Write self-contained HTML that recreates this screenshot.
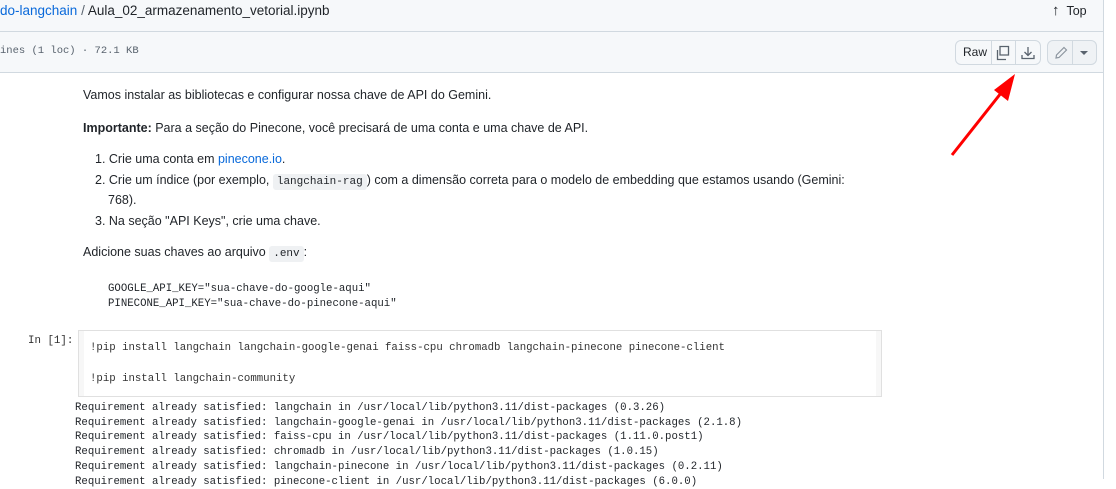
<!DOCTYPE html>
<html><head><meta charset="utf-8"><style>
*{margin:0;padding:0;box-sizing:border-box}
body{width:1116px;height:479px;overflow:hidden;background:#fff;font-family:"Liberation Sans",sans-serif;color:#1f2328;position:relative}
.abs{position:absolute;white-space:nowrap}
.mono{font-family:"Liberation Mono",monospace}
.p{font-size:12.5px;color:#1f2328}
code{font-family:"Liberation Mono",monospace;font-size:11px;background:#eff1f3;padding:2px 4px;border-radius:3px}
.out{font-family:"Liberation Mono",monospace;font-size:10.7px;color:#1f2328;line-height:14.7px}
.btn{position:absolute;top:40px;height:25px;border:1px solid #d1d9e0;background:#f6f8fa;border-radius:6px}
</style></head><body>
<div class="abs" style="left:0;top:0;width:1104px;height:32px;background:#f6f8fa;border-bottom:1px solid #d1d9e0"></div>
<div class="abs" style="left:0;top:32px;width:1104px;height:41px;background:#f6f8fa;border-bottom:1px solid #d1d9e0"></div>
<div class="abs" style="left:1103px;top:0;width:1px;height:479px;background:#d1d9e0"></div>
<div class="abs" style="left:0;top:3px;font-size:13.5px;line-height:16px"><span style="color:#0969da">do-langchain</span> <span style="color:#59636e">/</span> Aula_02_armazenamento_vetorial.ipynb</div>
<div class="abs" style="left:1052px;top:2px;font-size:12.5px"><span style="font-size:15px">↑</span>&nbsp;&nbsp;Top</div>
<div class="abs mono" style="left:0;top:45px;font-size:10.5px;color:#59636e">ines (1 loc) · 72.1 KB</div>
<div class="btn" style="left:955px;width:86px;background:#f6f8fa"></div>
<div class="abs" style="left:991px;top:41px;width:1px;height:23px;background:#d1d9e0"></div>
<div class="abs" style="left:1015px;top:41px;width:1px;height:23px;background:#d1d9e0"></div>
<div class="abs" style="left:963px;top:45px;font-size:12px;line-height:14px">Raw</div>
<svg class="abs" style="left:995px;top:45px" width="16" height="16" viewBox="0 0 16 16"><path d="M5 1.5h8.5v8.5H5z M2.5 5v9.5H11" fill="none" stroke="#59636e" stroke-width="1.3"/></svg>
<svg class="abs" style="left:1020px;top:45px" width="16" height="16" viewBox="0 0 16 16"><path d="M8 2v8 M4.5 7 8 10.5 11.5 7 M2 10v3.5h12V10" fill="none" stroke="#59636e" stroke-width="1.3"/></svg>
<div class="btn" style="left:1047px;width:50px;background:#eff2f5"></div>
<div class="abs" style="left:1072px;top:41px;width:1px;height:23px;background:#d1d9e0"></div>
<svg class="abs" style="left:1053px;top:45px" width="16" height="16" viewBox="0 0 16 16"><path d="M11 2.5l2.5 2.5L6 12.5 3 13l.5-3z" fill="none" stroke="#8c959f" stroke-width="1.2"/></svg>
<div class="abs" style="left:1080px;top:51px;width:0;height:0;border-left:4px solid transparent;border-right:4px solid transparent;border-top:4px solid #59636e"></div>

<svg class="abs" style="left:945px;top:70px" width="80" height="90" viewBox="0 0 80 90"><line x1="7" y1="85" x2="60" y2="18" stroke="#f00" stroke-width="3"/><polygon points="70,4 49,20 63,31" fill="#f00"/></svg>

<div class="abs p" style="left:83px;top:88px">Vamos instalar as bibliotecas e configurar nossa chave de API do Gemini.</div>
<div class="abs p" style="left:83px;top:121px"><b>Importante:</b> Para a seção do Pinecone, você precisará de uma conta e uma chave de API.</div>
<div class="abs p" style="left:95px;top:152px">1. Crie uma conta em <span style="color:#0969da">pinecone.io</span>.</div>
<div class="abs p" style="left:95px;top:173px">2. Crie um índice (por exemplo, <code>langchain-rag</code>) com a dimensão correta para o modelo de embedding que estamos usando (Gemini:</div>
<div class="abs p" style="left:108px;top:193px">768).</div>
<div class="abs p" style="left:95px;top:214px">3. Na seção "API Keys", crie uma chave.</div>
<div class="abs p" style="left:83px;top:245px">Adicione suas chaves ao arquivo <code>.env</code>:</div>
<div class="abs out" style="left:108px;top:282px">GOOGLE_API_KEY="sua-chave-do-google-aqui"<br>PINECONE_API_KEY="sua-chave-do-pinecone-aqui"</div>

<div class="abs mono" style="left:28px;top:335px;font-size:10.8px;color:#303030">In [1]:</div>
<div class="abs" style="left:78px;top:330px;width:804px;height:67px;border:1px solid #e0e0e0;background:#f7f7f7"></div>
<div class="abs" style="left:84px;top:331px;width:792px;height:65px;background:#fff"></div>
<div class="abs out" style="left:90px;top:341px;color:#333">!pip install langchain langchain-google-genai faiss-cpu chromadb langchain-pinecone pinecone-client</div>
<div class="abs out" style="left:90px;top:372px;color:#333">!pip install langchain-community</div>
<div class="abs out" style="left:75px;top:401px">Requirement already satisfied: langchain in /usr/local/lib/python3.11/dist-packages (0.3.26)<br>Requirement already satisfied: langchain-google-genai in /usr/local/lib/python3.11/dist-packages (2.1.8)<br>Requirement already satisfied: faiss-cpu in /usr/local/lib/python3.11/dist-packages (1.11.0.post1)<br>Requirement already satisfied: chromadb in /usr/local/lib/python3.11/dist-packages (1.0.15)<br>Requirement already satisfied: langchain-pinecone in /usr/local/lib/python3.11/dist-packages (0.2.11)<br>Requirement already satisfied: pinecone-client in /usr/local/lib/python3.11/dist-packages (6.0.0)</div>
</body></html>
